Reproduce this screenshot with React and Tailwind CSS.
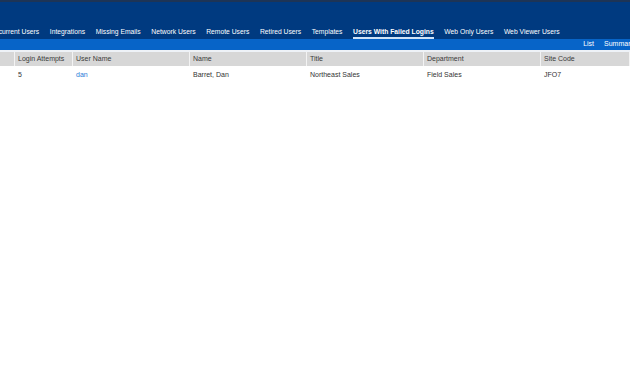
export default function App() {
  const tabs = [
    "Concurrent Users",
    "Integrations",
    "Missing Emails",
    "Network Users",
    "Remote Users",
    "Retired Users",
    "Templates",
    "Users With Failed Logins",
    "Web Only Users",
    "Web Viewer Users",
  ];
  const cols = [
    { w: "w-[15px]", h: "", v: "" },
    { w: "w-[58px]", h: "Login Attempts", v: "5" },
    { w: "w-[117px]", h: "User Name", v: "dan", link: true },
    { w: "w-[117px]", h: "Name", v: "Barret, Dan" },
    { w: "w-[117px]", h: "Title", v: "Northeast Sales" },
    { w: "w-[117px]", h: "Department", v: "Field Sales" },
    { w: "flex-1", h: "Site Code", v: "JFO7" },
  ];
  return (
    <div className="w-[630px] h-[380px] overflow-hidden bg-white font-['Liberation_Sans',Arial,sans-serif] text-[7px] text-[#333]">
      <div className="h-[2px] bg-[#1d3456]" />
      <div className="h-[37px] bg-[#003a80] flex items-end">
        <div className="flex ml-[-19px] whitespace-nowrap text-[6.75px]">
          {tabs.map((t) => {
            const active = t === "Users With Failed Logins";
            return (
              <div key={t} className="px-[5.3px] flex flex-col items-stretch">
                <div className={`text-white leading-[9px] ${active ? "font-bold" : ""}`}>{t}</div>
                <div className={`h-[2px] mt-[1px] ${active ? "bg-[#cfe2f7]" : ""}`} />
              </div>
            );
          })}
        </div>
      </div>
      <div className="h-[11px] bg-[#0764c8] flex items-center justify-end whitespace-nowrap text-white">
        <span className="mr-[10px]">List</span>
        <span className="mr-[-4px]">Summary</span>
      </div>
      <div className="h-[2px] bg-[#eef2f7]" />
      <div className="flex h-[14px] bg-[#d7d7d7] items-center">
        {cols.map((c, i) => (
          <div key={i} className={`${c.w} h-full flex items-center pt-[1px] pl-[3px] border-r border-[#f3f3f3] text-[#3a3a3a]`}>
            {c.h}
          </div>
        ))}
      </div>
      <div className="flex h-[18px] items-center pt-[1px]">
        {cols.map((c, i) => (
          <div key={i} className={`${c.w} pl-[3px] ${c.link ? "text-[#2a7ad8]" : "text-[#333]"}`}>
            {c.v}
          </div>
        ))}
      </div>
    </div>
  );
}
